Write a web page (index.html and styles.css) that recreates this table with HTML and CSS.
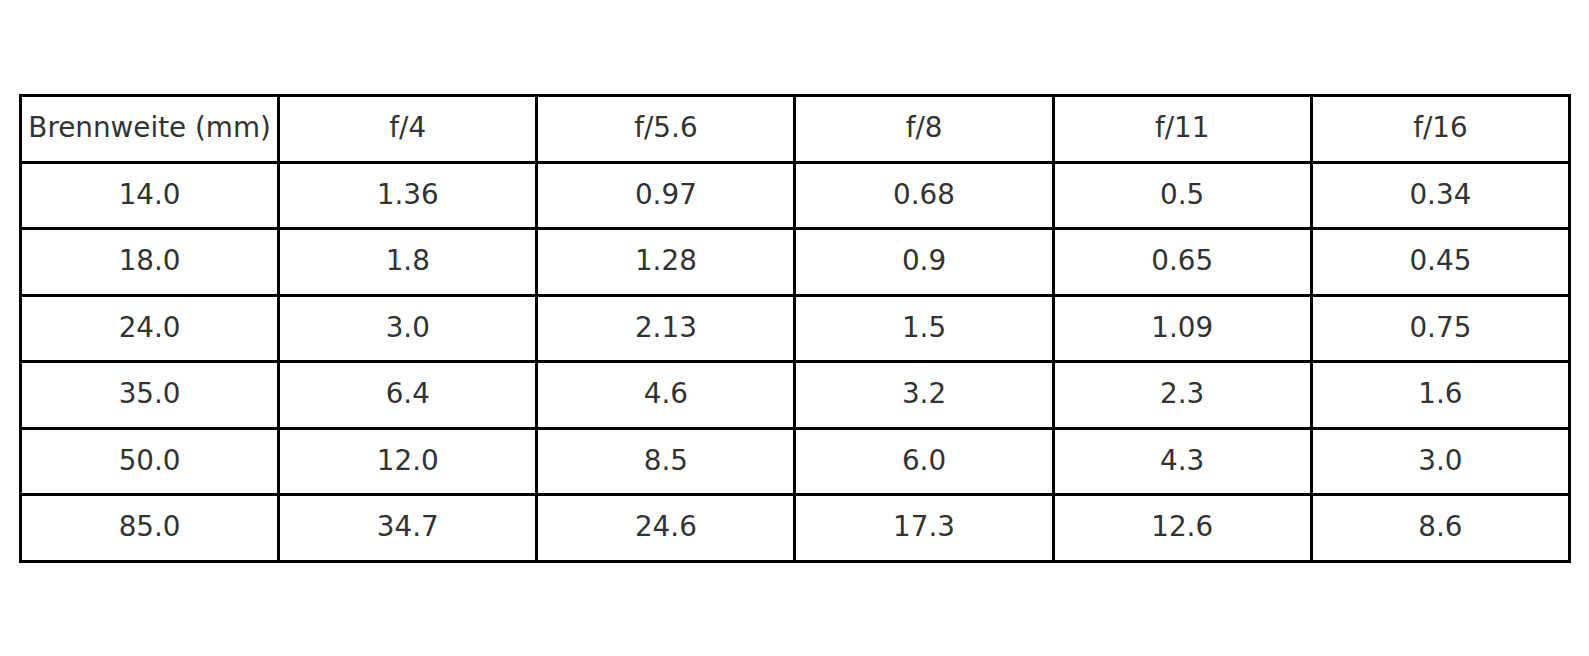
FILE: index.html
```html
<!DOCTYPE html>
<html>
<head>
<meta charset="utf-8">
<link rel="stylesheet" href="styles.css">
</head>
<body>
<div class="page">
<table class="grid">
<tr><td>Brennweite (mm)</td><td>f/4</td><td>f/5.6</td><td>f/8</td><td>f/11</td><td>f/16</td></tr>
<tr><td>14.0</td><td>1.36</td><td>0.97</td><td>0.68</td><td>0.5</td><td>0.34</td></tr>
<tr><td>18.0</td><td>1.8</td><td>1.28</td><td>0.9</td><td>0.65</td><td>0.45</td></tr>
<tr><td>24.0</td><td>3.0</td><td>2.13</td><td>1.5</td><td>1.09</td><td>0.75</td></tr>
<tr><td>35.0</td><td>6.4</td><td>4.6</td><td>3.2</td><td>2.3</td><td>1.6</td></tr>
<tr><td>50.0</td><td>12.0</td><td>8.5</td><td>6.0</td><td>4.3</td><td>3.0</td></tr>
<tr><td>85.0</td><td>34.7</td><td>24.6</td><td>17.3</td><td>12.6</td><td>8.6</td></tr>
</table>
</div>
</body>
</html>
```
FILE: styles.css
```css
html, body { margin: 0; padding: 0; background: #fff; }
.page { padding: 94px 0 0 19px; }
.grid {
  border-collapse: collapse;
  width: 1552px;
  table-layout: fixed;
  font-family: "DejaVu Sans", sans-serif;
  font-size: 27.8px;
  color: #333;
}
.grid td {
  border: 3px solid #000;
  height: 61.5px;
  padding: 0 0 2px 0;
  text-align: center;
  vertical-align: middle;
  white-space: nowrap;
}
```
